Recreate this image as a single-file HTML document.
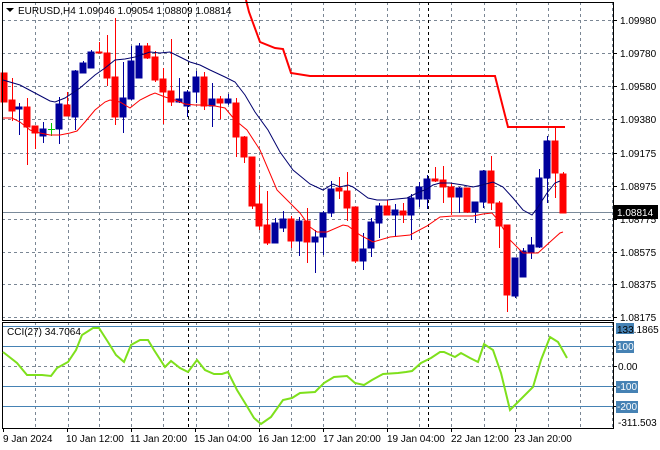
<!DOCTYPE html>
<html><head><meta charset="utf-8"><style>
html,body{margin:0;padding:0;background:#fff;width:660px;height:450px;overflow:hidden}
svg{display:block;font-family:"Liberation Sans",sans-serif;font-size:10px}
</style></head><body>
<svg width="660" height="450" viewBox="0 0 660 450" xmlns="http://www.w3.org/2000/svg">
<rect width="660" height="450" fill="#fff"/>
<g stroke="#7a8694" stroke-width="1" stroke-dasharray="3,3" fill="none">
<path d="M2 20.5H613M2 53.5H613M2 86.5H613M2 119.5H613M2 153.5H613M2 186.5H613M2 219.5H613M2 252.5H613M2 284.5H613M2 317.5H613"/>
<path d="M35.5 2V320M68.5 2V320M99.5 2V320M131.5 2V320M163.5 2V320M196.5 2V320M228.5 2V320M259.5 2V320M291.5 2V320M323.5 2V320M355.5 2V320M387.5 2V320M419.5 2V320M451.5 2V320M484.5 2V320M516.5 2V320M548.5 2V320M580.5 2V320M612.5 2V320"/>
<path d="M35.5 322V428M68.5 322V428M99.5 322V428M131.5 322V428M163.5 322V428M196.5 322V428M228.5 322V428M259.5 322V428M291.5 322V428M323.5 322V428M355.5 322V428M387.5 322V428M419.5 322V428M451.5 322V428M484.5 322V428M516.5 322V428M548.5 322V428M580.5 322V428M612.5 322V428"/>
<path d="M2 366.5H613"/>
</g>
<g stroke="#000" stroke-dasharray="3,3"><path d="M188.5 2V320M428.5 2V320M188.5 322V428M428.5 322V428"/></g>
<path d="M2 212.5H613" stroke="#7a8a9a" stroke-width="1"/>
<!-- candles -->
<g stroke-width="1">
<g stroke="#f00" fill="#f00">
<rect x="1" y="73" width="6" height="29"/>
<path d="M12.5 78V121"/><rect x="9" y="100" width="6" height="11"/>
<path d="M27.5 98V165"/><rect x="24" y="107" width="6" height="20"/>
<path d="M35.5 126V149"/><rect x="32" y="126" width="6" height="7"/>
<path d="M67.5 92V115"/><rect x="64" y="105" width="6" height="11"/>
<path d="M99.5 42V53"/><rect x="96" y="52" width="6" height="1"/>
<path d="M107.5 35V86"/><rect x="104" y="53" width="6" height="25"/>
<path d="M115.5 18V125"/><rect x="112" y="77" width="6" height="40"/>
<path d="M147.5 43V59"/><rect x="144" y="46" width="6" height="12"/>
<path d="M155.5 51V82"/><rect x="152" y="57" width="6" height="23"/>
<path d="M163.5 68V124"/><rect x="160" y="79" width="6" height="13"/>
<path d="M171.5 39V106"/><rect x="168" y="91" width="6" height="11"/>
<path d="M204.5 72V110"/><rect x="201" y="77" width="6" height="29"/>
<path d="M220.5 96V119"/><rect x="217" y="99" width="6" height="4"/>
<path d="M236.5 98V157"/><rect x="233" y="103" width="6" height="34"/>
<path d="M244.5 136V163"/><rect x="241" y="137" width="6" height="20"/>
<path d="M252.5 157V209"/><rect x="249" y="157" width="6" height="49"/>
<path d="M259.5 185V230"/><rect x="256" y="204" width="6" height="22"/>
<path d="M267.5 191V245"/><rect x="264" y="225" width="6" height="18"/>
<path d="M291.5 216V248"/><rect x="288" y="219" width="6" height="22"/>
<path d="M307.5 208V263"/><rect x="304" y="221" width="6" height="21"/>
<path d="M339.5 177V199"/><rect x="336" y="188" width="6" height="3"/>
<path d="M347.5 172V221"/><rect x="344" y="191" width="6" height="17"/>
<path d="M355.5 207V263"/><rect x="352" y="207" width="6" height="54"/>
<path d="M387.5 200V215"/><rect x="384" y="206" width="6" height="9"/>
<path d="M403.5 203V223"/><rect x="400" y="211" width="6" height="4"/>
<path d="M435.5 167V182"/><rect x="432" y="179" width="6" height="2"/>
<path d="M443.5 166V203"/><rect x="440" y="180" width="6" height="7"/>
<path d="M451.5 183V215"/><rect x="448" y="187" width="6" height="10"/>
<path d="M467.5 188V213"/><rect x="464" y="188" width="6" height="24"/>
<path d="M491.5 156V210"/><rect x="488" y="171" width="6" height="32"/>
<path d="M499.5 201V248"/><rect x="496" y="203" width="6" height="23"/>
<path d="M507.5 225V312"/><rect x="504" y="225" width="6" height="70"/>
<path d="M555.5 128V198"/><rect x="552" y="141" width="6" height="32"/>
<path d="M563.5 172V213"/><rect x="560" y="174" width="6" height="39"/>
</g>
<g stroke="#00009c" fill="#00009c">
<path d="M19.5 103V135"/><rect x="16" y="107" width="6" height="2"/>
<path d="M43.5 122V143"/><rect x="40" y="129" width="6" height="7"/>
<path d="M59.5 97V144"/><rect x="56" y="104" width="6" height="25"/>
<path d="M75.5 70V130"/><rect x="72" y="71" width="6" height="46"/>
<path d="M83.5 61V73"/><rect x="80" y="63" width="6" height="10"/>
<path d="M91.5 50V68"/><rect x="88" y="52" width="6" height="16"/>
<path d="M123.5 62V133"/><rect x="120" y="98" width="6" height="19"/>
<path d="M131.5 46V100"/><rect x="128" y="61" width="6" height="38"/>
<path d="M139.5 43V78"/><rect x="136" y="46" width="6" height="32"/>
<path d="M179.5 78V103"/><rect x="176" y="99" width="6" height="3"/>
<path d="M187.5 90V117"/><rect x="184" y="92" width="6" height="14"/>
<path d="M196.5 71V103"/><rect x="193" y="77" width="6" height="15"/>
<path d="M212.5 83V127"/><rect x="209" y="99" width="6" height="7"/>
<path d="M228.5 94V105"/><rect x="225" y="99" width="6" height="4"/>
<path d="M275.5 218V243"/><rect x="272" y="223" width="6" height="20"/>
<path d="M283.5 211V232"/><rect x="280" y="219" width="6" height="9"/>
<path d="M299.5 217V256"/><rect x="296" y="221" width="6" height="20"/>
<path d="M315.5 230V273"/><rect x="312" y="237" width="6" height="5"/>
<path d="M323.5 211V255"/><rect x="320" y="213" width="6" height="24"/>
<path d="M331.5 181V217"/><rect x="328" y="189" width="6" height="24"/>
<path d="M363.5 233V270"/><rect x="360" y="249" width="6" height="12"/>
<path d="M371.5 218V257"/><rect x="368" y="222" width="6" height="26"/>
<path d="M379.5 203V238"/><rect x="376" y="206" width="6" height="17"/>
<path d="M395.5 204V236"/><rect x="392" y="210" width="6" height="5"/>
<path d="M411.5 194V240"/><rect x="408" y="198" width="6" height="17"/>
<path d="M419.5 182V207"/><rect x="416" y="187" width="6" height="12"/>
<path d="M427.5 175V209"/><rect x="424" y="179" width="6" height="20"/>
<path d="M459.5 187V213"/><rect x="456" y="188" width="6" height="9"/>
<path d="M475.5 202V223"/><rect x="472" y="202" width="6" height="10"/>
<path d="M483.5 170V208"/><rect x="480" y="171" width="6" height="31"/>
<path d="M515.5 258V298"/><rect x="512" y="258" width="6" height="38"/>
<path d="M523.5 248V277"/><rect x="520" y="251" width="6" height="26"/>
<path d="M531.5 237V259"/><rect x="528" y="245" width="6" height="7"/>
<path d="M539.5 169V248"/><rect x="536" y="178" width="6" height="69"/>
<path d="M547.5 136V203"/><rect x="544" y="141" width="6" height="37"/>
</g>
<path d="M51.5 123V136M48 129.5H55" stroke="#0c0"/>
</g>
<!-- MAs -->
<polyline fill="none" stroke="#00006e" stroke-width="1" points="3,80 20,85 35,93 50,101 55,102 65,98 80,88 95,75 105,68 115,60 125,59 135,57 150,52 160,53 170,52 180,57 190,62 200,65 210,70 225,77 235,82 245,95 255,112 268,130 280,152 293,170 310,184 323,190 333,184 340,187 348,185 353,187 360,192 368,198 377,200 387,200 397,199 407,198 417,193 427,189 433,185 440,183 450,183 463,185 473,187 482,185 493,182 503,187 513,198 523,210 532,215 538,207 547,193 555,183 560,181"/>
<polyline fill="none" stroke="#f00" stroke-width="1" points="2,118 12,118 20,122 30,130 40,133 50,135 60,135 70,133 77,131 85,122 95,110 105,102 110,100 120,102 130,108 140,100 150,95 155,93 165,97 175,100 185,104 195,105 205,105 215,106 225,108 235,120 247,130 260,150 277,190 300,213 310,227 317,232 327,232 343,225 348,226 360,235 373,242 390,237 410,235 427,226 440,217 453,216 473,216 483,214 492,213 498,220 510,240 523,253 538,253 550,242 560,233 563,232"/>
<polyline fill="none" stroke="#f00" stroke-width="2" points="246,0 249,12 260,42 275,48 283,49 291,73 310,76 495,76 508,127 565,127"/>
<!-- frames -->
<rect x="2.5" y="2.5" width="611" height="318" fill="none" stroke="#000"/>
<rect x="2.5" y="322.5" width="611" height="106" fill="none" stroke="#000"/>
<!-- CCI levels -->
<g stroke="#4682b4"><path d="M3 326.5H613M3 346.5H613M3 386.5H613M3 406.5H613"/></g>
<polyline fill="none" stroke="#7ee01c" stroke-width="2" points="3,352 17,363 27,375 42,375 51,376 57,368 68,362 76,350 82,335 93,328 99,328 108,342 116,355 124,362 131,345 140,340 148,340 154,350 165,367 171,361 180,368 188,372 197,360 205,370 214,374 222,374 228,372 237,390 245,403 254,418 261,424 271,417 283,400 292,398 300,393 315,392 324,383 334,377 347,376 355,383 364,385 372,380 383,374 398,373 406,372 412,371 421,363 431,358 440,352 444,352 455,357 461,353 470,358 478,362 484,344 493,350 501,373 510,410 518,402 533,387 541,360 550,337 558,342 567,358"/>
<!-- price axis -->
<g stroke="#000"><path d="M614 20.5h3M614 53.5h3M614 86.5h3M614 119.5h3M614 153.5h3M614 186.5h3M614 219.5h3M614 252.5h3M614 284.5h3M614 317.5h3M614 346.5h3M614 366.5h3M614 386.5h3M614 406.5h3"/></g>
<g fill="#000">
<text x="620" y="24">1.09980</text><text x="620" y="57">1.09780</text><text x="620" y="90">1.09580</text><text x="620" y="123">1.09380</text><text x="620" y="157">1.09175</text><text x="620" y="190">1.08975</text><text x="620" y="223">1.08775</text><text x="620" y="256">1.08575</text><text x="620" y="288">1.08375</text><text x="620" y="321">1.08175</text>
</g>
<rect x="614" y="205" width="44" height="14" fill="#000"/>
<text x="617" y="216" fill="#fff">1.08814</text>
<rect x="616" y="323" width="18" height="11" fill="#4682b4"/>
<text x="617" y="333" fill="#000">133.1865</text>
<rect x="616" y="341" width="18" height="12" fill="#4682b4"/><text x="617" y="350" fill="#fff">100</text>
<text x="618" y="370" fill="#000">0.00</text>
<rect x="616" y="381" width="22" height="12" fill="#4682b4"/><text x="617" y="390" fill="#fff">-100</text>
<rect x="616" y="401" width="22" height="12" fill="#4682b4"/><text x="617" y="410" fill="#fff">-200</text>
<text x="618" y="426" fill="#000">-311.503</text>
<!-- header -->
<path d="M6 8h8l-4 4z" fill="#000"/>
<text x="18" y="14" fill="#000">EURUSD,H4  1.09046 1.09054 1.08809 1.08814</text>
<text x="7" y="335" fill="#000">CCI(27) 34.7064</text>
<!-- time axis -->
<g stroke="#000"><path d="M3.5 429v3M67.5 429v3M131.5 429v3M195.5 429v3M259.5 429v3M323.5 429v3M387.5 429v3M451.5 429v3M515.5 429v3"/></g>
<g fill="#000">
<text x="3" y="442">9 Jan 2024</text><text x="66" y="442">10 Jan 12:00</text><text x="130" y="442">11 Jan 20:00</text><text x="194" y="442">15 Jan 04:00</text><text x="258" y="442">16 Jan 12:00</text><text x="323" y="442">17 Jan 20:00</text><text x="387" y="442">19 Jan 04:00</text><text x="451" y="442">22 Jan 12:00</text><text x="514" y="442">23 Jan 20:00</text>
</g>
</svg>
</body></html>
